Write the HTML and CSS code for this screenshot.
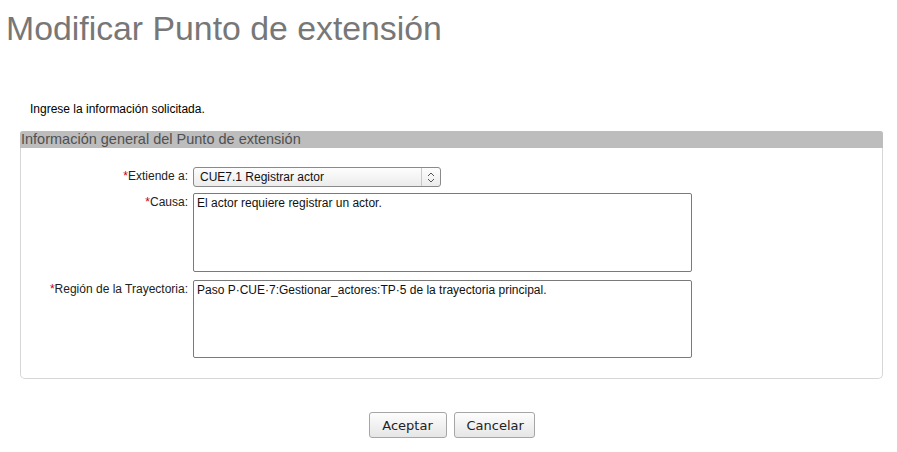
FILE: index.html
```html
<!DOCTYPE html>
<html lang="es">
<head>
<meta charset="utf-8">
<title>Modificar Punto de extensión</title>
<link rel="stylesheet" href="styles.css">
</head>
<body>
<h1 class="title">Modificar Punto de extensión</h1>
<p class="intro">Ingrese la información solicitada.</p>
<div class="frame">
  <div class="legend">Información general del Punto de extensión</div>
  <div class="form">
    <div class="row row-select">
      <label class="label"><span class="req">*</span>Extiende a:</label>
      <div class="select">
        <span class="select-text">CUE7.1 Registrar actor</span>
        <span class="select-btn">
          <svg width="8" height="11" viewBox="0 0 8 11"><path d="M1 4 L4 1 L7 4 M1 7 L4 10 L7 7" fill="none" stroke="#555" stroke-width="1"/></svg>
        </span>
      </div>
    </div>
    <div class="row row-causa">
      <label class="label"><span class="req">*</span>Causa:</label>
      <div class="area area-tall">El actor requiere registrar un actor.</div>
    </div>
    <div class="row">
      <label class="label"><span class="req">*</span>Región de la Trayectoria:</label>
      <div class="area">Paso P·CUE·7:Gestionar_actores:TP·5 de la trayectoria principal.</div>
    </div>
  </div>
</div>
<div class="buttons">
  <button class="btn btn-ok">Aceptar</button>
  <button class="btn btn-cancel">Cancelar</button>
</div>
</body>
</html>
```
FILE: styles.css
```css
html, body {
  margin: 0;
  padding: 0;
  background: #fff;
}
body {
  font-family: "Liberation Sans", Arial, sans-serif;
  color: #000;
  width: 897px;
}
.title {
  margin: 0;
  padding: 8px 0 0 6px;
  font-weight: normal;
  font-size: 33.8px;
  line-height: 40px;
  color: #777;
}
.intro {
  margin: 0;
  padding: 53px 0 0 30px;
  font-size: 12px;
  line-height: 16px;
}
.frame {
  margin: 14px 14px 0 20px;
  border: 1px solid #d6d6d6;
  border-top: none;
  border-radius: 3px 3px 5px 5px;
  padding-bottom: 20px;
}
.legend {
  background: #bdbdbd;
  color: #505050;
  font-size: 14.5px;
  line-height: 17px;
  padding-left: 1px;
  margin: 0 -1px 0 -1px;
  border-radius: 3px 3px 0 0;
}
.form {
  padding-top: 19px;
  display: flex;
  flex-direction: column;
}
.row {
  display: flex;
  align-items: flex-start;
}
.row-select {
  margin-bottom: 6px;
}
.row-causa {
  margin-bottom: 8px;
}
.label {
  width: 167px;
  text-align: right;
  font-size: 12px;
  line-height: 14px;
  color: #222;
  padding-right: 5px;
  padding-top: 2px;
  flex: none;
}
.req {
  color: #c00;
}
.select {
  width: 246px;
  height: 18px;
  border: 1px solid #8a8a8a;
  border-radius: 3px;
  background: linear-gradient(#fdfdfd, #ececec);
  display: flex;
  align-items: center;
  font-size: 12px;
  color: #111;
}
.select-text {
  flex: 1;
  padding-left: 6px;
}
.select-btn {
  width: 18px;
  height: 18px;
  border-left: 1px solid #c8c8c8;
  display: flex;
  align-items: center;
  justify-content: center;
}
.area {
  width: 491px;
  height: 72px;
  border: 1px solid #7a7a7a;
  border-radius: 2px;
  padding: 2px 3px;
  font-size: 12px;
  line-height: 14px;
  color: #111;
  background: #fff;
}
.area-tall {
  height: 73px;
}
.buttons {
  display: flex;
  justify-content: center;
  gap: 7px;
  margin-top: 33px;
  padding-left: 6px;
}
.btn {
  font-family: "DejaVu Sans", sans-serif;
  font-size: 13px;
  height: 26px;
  padding: 0 12px;
  border: 1px solid #a6a6a6;
  border-radius: 3px;
  background: linear-gradient(#fdfdfd, #e6e6e6);
  color: #222;
}
.btn-ok { width: 78px; }
.btn-cancel { width: 81px; }
```
